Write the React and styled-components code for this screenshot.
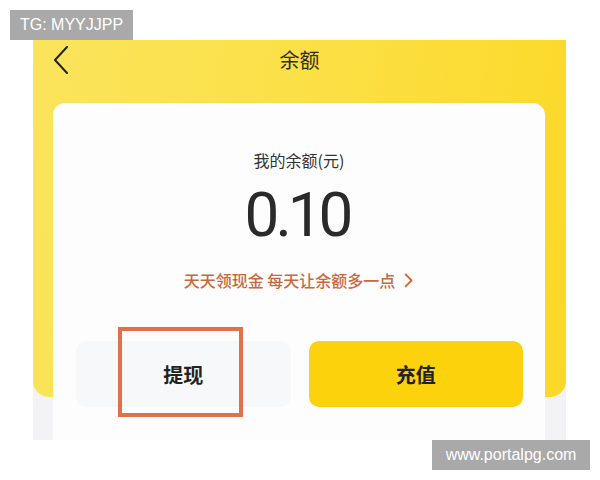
import React from 'react';
import styled, { createGlobalStyle } from 'styled-components';

const GlobalStyle = createGlobalStyle`
  html, body {
    margin: 0;
    padding: 0;
    background: #ffffff;
  }
  body {
    font-family: "Noto Sans CJK SC", "Noto Sans", sans-serif;
  }
`;

const Page = styled.div`
  position: relative;
  width: 600px;
  height: 480px;
  padding: 40px 0 0 33px;
  box-sizing: border-box;
`;

const Watermark = styled.div`
  position: absolute;
  height: 30px;
  padding: 0 10px;
  display: flex;
  align-items: center;
  background: #a9a9a9;
  color: #ffffff;
  font-family: "Liberation Sans", Arial, sans-serif;
  font-size: 16px;
  ${({ $corner }) =>
    $corner === 'top'
      ? 'left: 10px; top: 10px;'
      : 'left: 432px; top: 440px; width: 158px; box-sizing: border-box; justify-content: center;'}
`;

const Phone = styled.div`
  width: 533px;
  height: 400px;
  background: #f3f3f5;
  overflow: hidden;
`;

const YellowTop = styled.div`
  height: 357px;
  background: linear-gradient(100deg, #fae45c 0%, #fbe047 45%, #fcd826 100%);
  border-radius: 0 0 16px 16px;
`;

const Nav = styled.div`
  height: 40px;
  display: grid;
  grid-template-columns: 1fr auto 1fr;
  align-items: center;
  padding: 0 20px;
`;

const BackBtn = styled.div`
  display: flex;
  align-items: center;
  justify-self: start;
`;

const Title = styled.div`
  font-size: 20px;
  color: #2f2b1c;
  line-height: 40px;
`;

const Card = styled.div`
  margin: -294px 21px 0 20px;
  height: 340px;
  background: #fdfdfd;
  border-radius: 12px 12px 0 0;
  padding-top: 46px;
  box-sizing: border-box;
  display: flex;
  flex-direction: column;
  align-items: center;
`;

const Label = styled.div`
  font-size: 16px;
  line-height: 22px;
  color: #333333;
`;

const Amount = styled.div`
  margin-top: 12px;
  font-family: Roboto, "Liberation Sans", sans-serif;
  font-weight: 400;
  font-size: 62px;
  line-height: 64px;
  letter-spacing: -4px;
  color: #2a2a2a;
  padding-right: 4px;
`;

const Promo = styled.div`
  margin-top: 22px;
  display: flex;
  align-items: center;
  gap: 7px;
  font-size: 16px;
  font-weight: 500;
  line-height: 22px;
  color: #c9683c;
`;

const Buttons = styled.div`
  margin-top: 50px;
  align-self: stretch;
  display: grid;
  grid-template-columns: 1fr 1fr;
  gap: 18px;
  padding: 0 22px 0 23px;
`;

const ActionBtn = styled.div`
  position: relative;
  height: 66px;
  display: flex;
  align-items: center;
  justify-content: center;
  border-radius: 10px;
  font-size: 20px;
  font-weight: 700;
  color: #222222;
  background: ${({ $primary }) => ($primary ? '#fcd20c' : '#f7f8fa')};
`;

const Highlight = styled.div`
  position: absolute;
  left: 42px;
  top: -14px;
  width: 125px;
  height: 90px;
  border: 4px solid #e2714b;
  box-sizing: border-box;
`;

const Chevron = ({ size = 12, stroke = '#c9683c' }) => (
  <svg width={size} height={size * 1.4} viewBox="0 0 10 14" fill="none">
    <path d="M3 2l5 5-5 5" stroke={stroke} strokeWidth="1.6" strokeLinecap="round" strokeLinejoin="round" />
  </svg>
);

export default function App() {
  return (
    <Page>
      <GlobalStyle />
      <Phone>
        <YellowTop>
          <Nav>
            <BackBtn>
              <svg width="16" height="28" viewBox="0 0 16 28" fill="none">
                <path d="M14 1L2 14l12 13" stroke="#222" strokeWidth="2" strokeLinecap="round" strokeLinejoin="round" />
              </svg>
            </BackBtn>
            <Title>余额</Title>
            <div />
          </Nav>
        </YellowTop>
        <Card>
          <Label>我的余额(元)</Label>
          <Amount>0.10</Amount>
          <Promo>
            <span>天天领现金 每天让余额多一点</span>
            <Chevron />
          </Promo>
          <Buttons>
            <ActionBtn>
              提现
              <Highlight />
            </ActionBtn>
            <ActionBtn $primary>充值</ActionBtn>
          </Buttons>
        </Card>
      </Phone>
      <Watermark $corner="top">TG: MYYJJPP</Watermark>
      <Watermark $corner="bottom">www.portalpg.com</Watermark>
    </Page>
  );
}
